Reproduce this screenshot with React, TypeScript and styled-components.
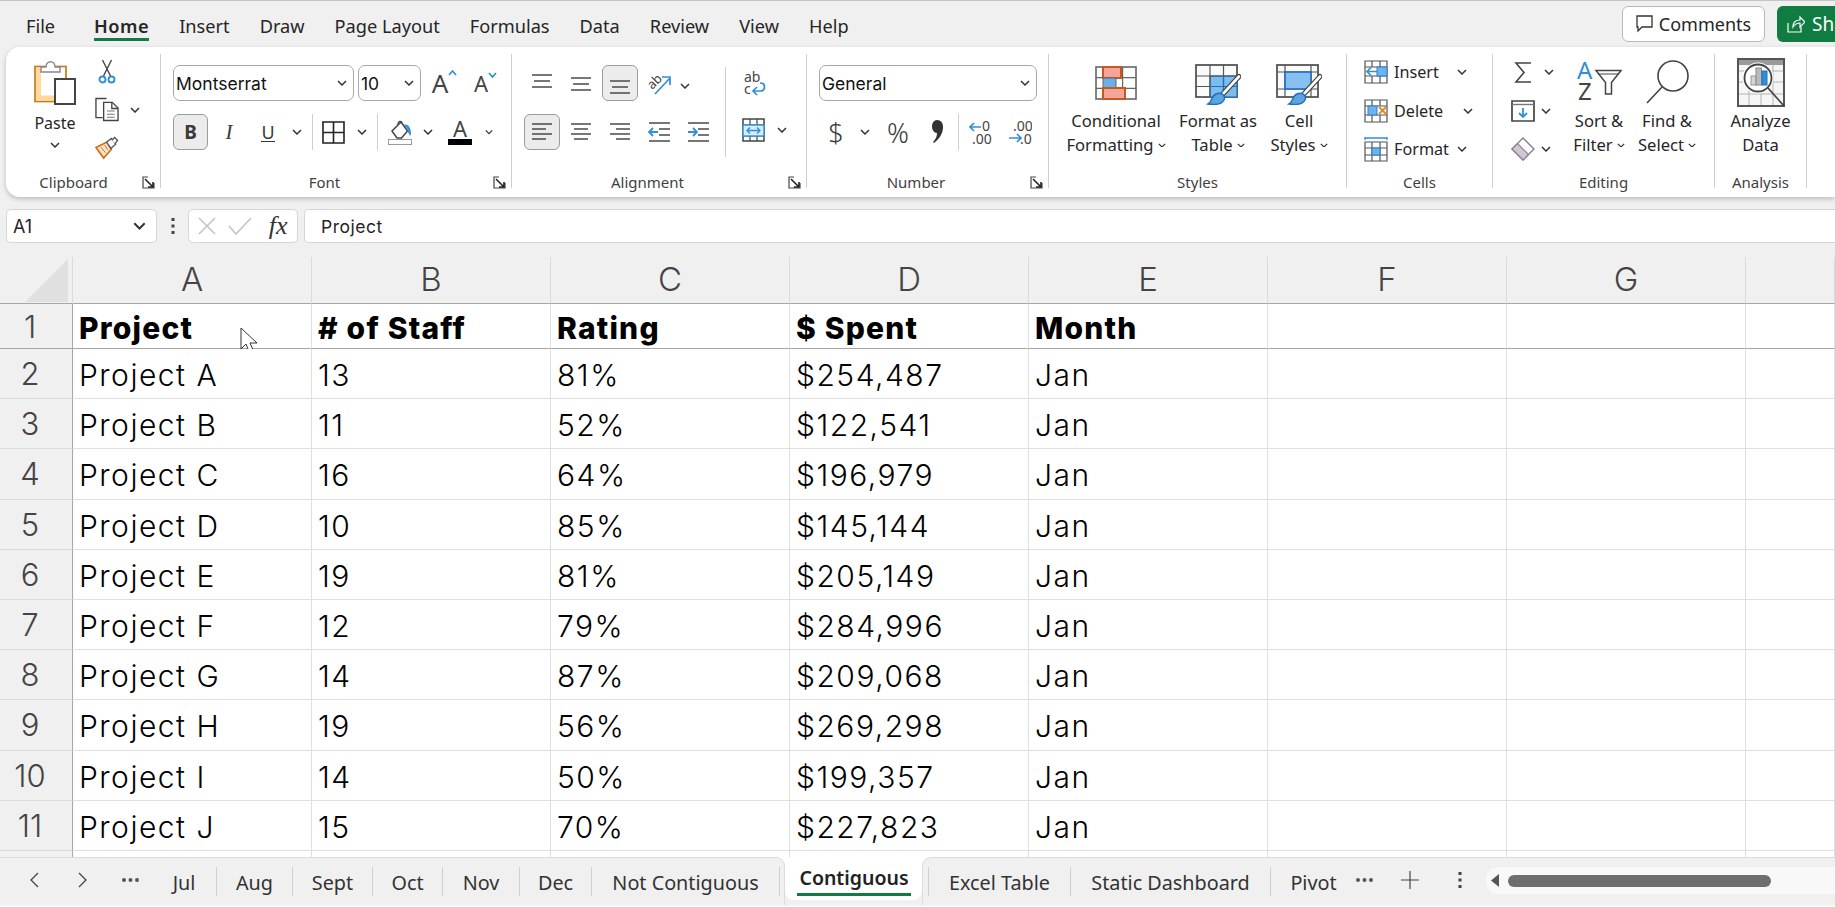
import React from "react";
import styled, { createGlobalStyle } from "styled-components";

const UI_FONT = `"Noto Sans", "Open Sans", sans-serif`;
const CELL_FONT = `Inter, "Open Sans", sans-serif`;
const GREEN = "#107c41";
const BLUE = "#2f8fd8";

const GlobalStyle = createGlobalStyle`
  html, body { margin: 0; padding: 0; background: #f0f0f0; }
  #root { width: 1835px; height: 907px; }
`;

const Win = styled.div`
  width: 1835px;
  height: 907px;
  overflow: hidden;
  display: flex;
  flex-direction: column;
  background: #f0f0f0;
  border-top: 1px solid #c4c4c4;
  box-sizing: border-box;
  font-family: ${UI_FONT};
  color: #262626;
`;

/* top menu */
const MenuBar = styled.div`
  flex: 0 0 46px;
  display: flex;
  align-items: flex-start;
  padding-left: 26px;
`;
const MenuTabs = styled.div`
  display: flex;
  gap: 30px;
`;
const MenuTab = styled.div<{ $active?: boolean }>`
  font-size: 18.2px;
  line-height: 24px;
  height: 40px;
  padding-top: 13px;
  box-sizing: border-box;
  font-weight: ${(p) => (p.$active ? 600 : 400)};
  letter-spacing: ${(p) => (p.$active ? "0.5px" : "0")};
  border-bottom: ${(p) => (p.$active ? `3px solid ${GREEN}` : "none")};
  margin-left: ${(p) => (p.$active ? "9px" : "0")};
`;
const TopActions = styled.div`
  margin-left: auto;
  display: flex;
  gap: 12px;
  padding-top: 5px;
  width: 213px;
  overflow: hidden;
  flex-shrink: 0;
`;
const CommentsBtn = styled.div`
  flex: 0 0 143px;
  height: 36px;
  box-sizing: border-box;
  background: #fff;
  border: 1px solid #b8b8b8;
  border-radius: 6px;
  display: flex;
  align-items: center;
  justify-content: center;
  gap: 6px;
  font-size: 18px;
`;
const ShareBtn = styled.div`
  flex: 0 0 90px;
  height: 36px;
  background: ${GREEN};
  border-radius: 6px;
  color: #fff;
  display: flex;
  align-items: center;
  padding-left: 10px;
  gap: 7px;
  font-size: 19px;
`;

/* ribbon */
const Ribbon = styled.div`
  flex: 0 0 150px;
  margin-left: 6px;
  background: #fff;
  border-radius: 14px 0 0 14px;
  box-shadow: 0 2px 5px rgba(0, 0, 0, 0.22);
  display: flex;
  align-items: flex-start;
  padding-top: 7px;
  box-sizing: border-box;
  position: relative;
`;
const Group = styled.div<{ $w: number }>`
  flex: 0 0 ${(p) => p.$w}px;
  height: 134px;
  box-sizing: border-box;
  border-right: 1px solid #cfcfcf;
  display: flex;
  flex-direction: column;
`;
const GroupBody = styled.div<{ $pad?: number }>`
  height: 116px;
  display: flex;
  padding-left: ${(p) => p.$pad ?? 0}px;
`;
const LabelRow = styled.div`
  height: 18px;
  display: flex;
  align-items: flex-start;
`;
const GroupLabel = styled.div<{ $shift?: number }>`
  flex: 1;
  text-align: center;
  font-size: 15px;
  line-height: 24px;
  color: #3f3f3f;
  padding-left: ${(p) => p.$shift ?? 0}px;
`;
const Launcher = styled.div`
  flex: 0 0 23px;
  padding-top: 6px;
  display: flex;
  justify-content: center;
`;
const PasteCol = styled.div`
  margin-left: 26px;
  width: 46px;
  padding-top: 6px;
  display: flex;
  flex-direction: column;
  align-items: center;
`;
const PasteText = styled.div`
  font-size: 16px;
  line-height: 24px;
  margin-top: 5px;
  margin-bottom: 7px;
`;
const Stack = styled.div<{ $left?: number; $w?: number; $top?: number }>`
  margin-left: ${(p) => p.$left ?? 0}px;
  width: ${(p) => (p.$w ? `${p.$w}px` : "auto")};
  padding-top: ${(p) => p.$top ?? 0}px;
  display: flex;
  flex-direction: column;
  gap: 4.5px;
`;
const StackRow = styled.div`
  height: 34px;
  display: flex;
  align-items: center;
  font-size: 16px;
`;
const Slot = styled.div<{ $w: number }>`
  flex: 0 0 ${(p) => p.$w}px;
  width: ${(p) => p.$w}px;
  display: flex;
  align-items: center;
  justify-content: center;
`;
const RowsCol = styled.div`
  padding-top: 11px;
  display: flex;
  flex-direction: column;
  gap: 13px;
`;
const ToolRow = styled.div`
  height: 36px;
  display: flex;
  align-items: center;
`;
const Combo = styled.div<{ $w: number; $gap?: number }>`
  width: ${(p) => p.$w}px;
  height: 36px;
  box-sizing: border-box;
  border: 1px solid #a8a8a8;
  border-radius: 7px;
  margin-right: ${(p) => p.$gap ?? 0}px;
  padding: 0 6px 0 2px;
  display: flex;
  align-items: center;
  justify-content: space-between;
  font-family: ${CELL_FONT};
  font-size: 17.5px;
  color: #111;
`;
const PressedBtn = styled.div<{ $w?: number }>`
  width: ${(p) => p.$w ?? 35}px;
  height: 36px;
  box-sizing: border-box;
  background: #ececec;
  border: 1px solid #9c9c9c;
  border-radius: 6px;
  display: flex;
  align-items: center;
  justify-content: center;
`;
const ToolSep = styled.div<{ $l?: number; $r?: number }>`
  width: 1px;
  height: 36px;
  background: #cfcfcf;
  margin: 0 ${(p) => p.$r ?? 3}px 0 ${(p) => p.$l ?? 4}px;
`;
const BoldGlyph = styled.span`
  font-size: 19px;
  font-weight: 700;
  color: #3a3a3a;
`;
const ItalicGlyph = styled.span`
  font-family: "Liberation Serif", serif;
  font-style: italic;
  font-size: 21px;
  color: #3a3a3a;
`;
const UnderGlyph = styled.span`
  font-size: 18px;
  color: #3a3a3a;
  border-bottom: 1.5px solid #3a3a3a;
  line-height: 18px;
`;
const SizeGlyph = styled.span<{ $size: number }>`
  font-size: ${(p) => p.$size}px;
  color: #444;
  line-height: 1;
  display: inline-flex;
  align-items: flex-start;
  margin-left: 5px;
`;
const NumGlyph = styled.span<{ $size: number }>`
  font-size: ${(p) => p.$size}px;
  font-family: ${UI_FONT};
  font-weight: 300;
  color: #3a3a3a;
  line-height: 1;
`;
const AlignGrid = styled.div`
  padding-top: 11px;
  display: grid;
  grid-template-columns: repeat(5, 36px);
  grid-auto-rows: 36px;
  column-gap: 3px;
  row-gap: 13px;
  align-items: center;
  justify-items: center;
`;
const AlignChevron = styled.div`
  justify-self: start;
`;
const TallSep = styled.div`
  width: 1px;
  height: 90px;
  margin: 13px 16px 0 9px;
  background: #cfcfcf;
`;
const WrapCol = styled.div`
  padding-top: 17px;
  display: flex;
  flex-direction: column;
  gap: 22px;
`;
const WrapRow = styled.div<{ $indent?: number }>`
  display: flex;
  align-items: center;
  gap: 12px;
  padding-left: ${(p) => p.$indent ?? 0}px;
`;
const BigBtn = styled.div<{ $w: number }>`
  flex: 0 0 ${(p) => p.$w}px;
  width: ${(p) => p.$w}px;
  padding-top: 6px;
  display: flex;
  flex-direction: column;
  align-items: center;
`;
const BigIcon = styled.div`
  height: 46px;
  margin-bottom: 3px;
  display: flex;
  align-items: center;
  justify-content: center;
`;
const BigText = styled.div`
  font-size: 16.6px;
  line-height: 24px;
  text-align: center;
  white-space: nowrap;
  display: flex;
  align-items: center;
  gap: 4px;
`;
const RowText = styled.span<{ $w: number }>`
  width: ${(p) => p.$w}px;
  font-size: 16.2px;
`;

/* formula bar */
const FormulaBar = styled.div`
  flex: 0 0 34px;
  margin-top: 12px;
  display: flex;
  align-items: stretch;
  padding-left: 6px;
`;
const FieldBox = styled.div<{ $w?: number }>`
  ${(p) => (p.$w ? `flex: 0 0 ${p.$w}px;` : "flex: 1;")}
  box-sizing: border-box;
  background: #fff;
  border: 1px solid #d6d6d6;
  border-radius: 5px;
  display: flex;
  align-items: center;
`;
const NameBox = styled(FieldBox)`
  padding: 0 10px 0 6px;
  justify-content: space-between;
  font-family: ${CELL_FONT};
  font-size: 18px;
`;
const FormulaDots = styled.div`
  flex: 0 0 31px;
  display: flex;
  align-items: center;
  justify-content: center;
`;
const FormulaBtns = styled(FieldBox)`
  justify-content: space-around;
  padding: 0 4px 0 2px;
  margin-right: 6px;
`;
const FxText = styled.span`
  font-family: "Liberation Serif", serif;
  font-style: italic;
  font-size: 26px;
  color: #333;
  margin-left: 6px;
`;
const FormulaInput = styled(FieldBox)`
  padding-left: 16px;
  font-family: ${CELL_FONT};
  font-size: 17.5px;
  letter-spacing: 0.5px;
  border-right: none;
  border-radius: 5px 0 0 5px;
`;

/* sheet */
const SheetArea = styled.div`
  flex: 1;
  min-height: 0;
  margin-top: 14px;
  overflow: hidden;
  background: #fff;
`;
const Sheet = styled.div`
  display: grid;
  grid-template-columns: 73px repeat(7, 239px) 1fr;
  grid-template-rows: 47px 45px repeat(10, 50.2px) 20px;
`;
const Corner = styled.div`
  background: #f0f0f0;
  border-right: 1px solid #dadada;
  border-bottom: 1px solid #a6a6a6;
  box-sizing: border-box;
  display: flex;
  justify-content: flex-end;
  align-items: flex-start;
  padding: 1px 3px 0 0;
`;
const ColHead = styled.div`
  background: #f0f0f0;
  border-right: 1px solid #dadada;
  border-bottom: 1px solid #a6a6a6;
  box-sizing: border-box;
  padding-bottom: 2px;
  display: flex;
  align-items: center;
  justify-content: center;
  font-family: ${CELL_FONT};
  font-weight: 300;
  font-size: 33px;
  color: #444;
`;
const RowHead = styled.div<{ $first?: boolean }>`
  background: #f0f0f0;
  border-right: 1px solid #a6a6a6;
  border-bottom: 1px solid ${(p) => (p.$first ? "#a6a6a6" : "#dadada")};
  box-sizing: border-box;
  display: flex;
  align-items: center;
  justify-content: center;
  padding-right: 12px;
  font-family: ${CELL_FONT};
  font-weight: 300;
  font-size: 31px;
  color: #444;
`;
const Cell = styled.div<{ $head?: boolean }>`
  position: relative;
  background: #fff;
  border-right: 1px solid #e0e0e0;
  border-bottom: 1px solid ${(p) => (p.$head ? "#a6a6a6" : "#dfdfdf")};
  box-sizing: border-box;
  padding: 3px 0 0 6px;
  display: flex;
  align-items: center;
  white-space: nowrap;
  font-family: ${CELL_FONT};
  font-size: 30px;
  font-weight: ${(p) => (p.$head ? 800 : 300)};
  letter-spacing: ${(p) => (p.$head ? "1.2px" : "1.5px")};
  color: #000;
`;
const MouseCursor = styled.svg`
  position: absolute;
  left: 167px;
  top: 23px;
`;

/* sheet tabs */
const TabBar = styled.div`
  flex: 0 0 50px;
  display: flex;
  background: linear-gradient(#fff 0 24px, #f0f0f0 24px);
  border-bottom: 2px solid #f9f9f9;
  box-sizing: border-box;
`;
const Strip = styled.div<{ $side: "left" | "right" }>`
  display: flex;
  align-items: flex-start;
  background: #f0f0f0;
  border-top: 1px solid #dcdcdc;
  padding-top: 9px;
  box-sizing: border-box;
  ${(p) =>
    p.$side === "left"
      ? "flex: 0 0 785px; padding-left: 10px; border-top-right-radius: 9px; border-right: 1px solid #dcdcdc;"
      : "flex: 1; padding-left: 5px; border-top-left-radius: 9px; border-left: 1px solid #dcdcdc; min-width: 0;"}
`;
const NavBtn = styled.div<{ $w: number }>`
  flex: 0 0 ${(p) => p.$w}px;
  height: 26px;
  display: flex;
  align-items: center;
  justify-content: center;
`;
const SheetTab = styled.div<{ $w: number; $last?: boolean }>`
  flex: 0 0 ${(p) => p.$w}px;
  height: 29px;
  box-sizing: border-box;
  font-size: 19.8px;
  line-height: 32px;
  text-align: center;
  white-space: nowrap;
  color: #333;
  border-right: ${(p) => (p.$last ? "none" : "1px solid #cfcfcf")};
`;
const FirstSep = styled.div`
  width: 1px;
  height: 29px;
  background: #cfcfcf;
`;
const ActiveTab = styled.div`
  flex: 0 0 137px;
  height: 43px;
  box-sizing: border-box;
  background: #fff;
  border-radius: 0 0 9px 9px;
  padding: 7px 11px 0 12px;
  font-size: 19.5px;
  font-weight: 600;
  line-height: 27px;
  text-align: center;
  white-space: nowrap;
  color: #222;
`;
const ActiveLine = styled.div`
  height: 3px;
  margin-top: 2px;
  background: ${GREEN};
`;
const ScrollTrack = styled.div`
  flex: 1;
  margin-left: 13px;
  height: 27px;
  background: #f8f8f8;
  border-radius: 13px 0 0 13px;
  display: flex;
  align-items: center;
  padding-left: 5px;
`;
const ScrollThumb = styled.div`
  width: 263px;
  height: 12px;
  margin-left: 9px;
  border-radius: 6px;
  background: #6e6e6e;
`;

/* icons */
const Chevron = ({ w = 10, color = "#333" }: { w?: number; color?: string }) => (
  <svg width={w} height={(w * 6) / 10} viewBox="0 0 10 6">
    <path d="M1 1l4 4 4-4" fill="none" stroke={color} strokeWidth="1.5" />
  </svg>
);

const CornerMark = () => (
  <svg width="44" height="44" viewBox="0 0 44 44">
    <path d="M43 1v43H0z" fill="#e0e0e0" />
  </svg>
);

const LauncherIcon = () => (
  <svg width="13" height="13" viewBox="0 0 13 13" fill="none" stroke="#444" strokeWidth="1.2">
    <path d="M6 1H1v11h11V7" />
    <path d="M3 3l8 8M11 6v5H6" strokeWidth="1.6" stroke="#222" />
  </svg>
);

const PasteIcon = () => (
  <svg width="42" height="46" viewBox="0 0 42 46">
    <rect x="1" y="6.500" width="31" height="35" fill="#fff" stroke="#c97a16" strokeWidth="1.7" />
    <path d="M2 7.500h5v28h25v5H2z" fill="#fdd9a0" />
    <path d="M7 12V7h5c0-7 9-7 9 0h5v5z" fill="#fff" stroke="#888" strokeWidth="1.4" />
    <rect x="21" y="19" width="20" height="25" fill="#fff" stroke="#444" strokeWidth="2" />
  </svg>
);
const CutIcon = () => (
  <svg width="18" height="25" viewBox="0 0 18 25" fill="none">
    <path d="M4.500 1l8 16M13.500 1l-8 16" stroke="#444" strokeWidth="1.4" />
    <circle cx="4.500" cy="20.500" r="3" stroke={BLUE} strokeWidth="1.9" />
    <circle cx="13.500" cy="20.500" r="3" stroke={BLUE} strokeWidth="1.9" />
  </svg>
);
const CopyIcon = () => (
  <svg width="25" height="25" viewBox="0 0 25 25" fill="none" stroke="#444" strokeWidth="1.4">
    <path d="M12 1H1v20h7" />
    <path d="M9 5h9l6 6v13H9z" fill="#fff" />
    <path d="M17.500 5v6.500H24" />
    <path d="M12.500 14h8M12.500 17.500h8M12.500 20.500h8" stroke="#777" strokeWidth="1.1" />
  </svg>
);
const PainterIcon = () => (
  <svg width="25" height="24" viewBox="0 0 25 24">
    <path d="M1 11.500L13 5.500l4 8-8 9z" fill="#fbe3c4" stroke="#c9701a" strokeWidth="1.7" />
    <path d="M6 11l5 6M10 9l3.500 5" stroke="#c9701a" strokeWidth="1" />
    <path d="M12 6l5-4 4.500 6-5 4.500z" fill="#fff" stroke="#555" strokeWidth="1.4" />
    <path d="M17.500 4l3-3 3 3-2.500 3.500" fill="#fff" stroke="#555" strokeWidth="1.4" />
  </svg>
);
const Caret = ({ up }: { up?: boolean }) => (
  <svg width="9" height="6" viewBox="0 0 9 6">
    <path d={up ? "M1 5l3.5-4L8 5" : "M1 1l3.5 4L8 1"} fill="none" stroke={BLUE} strokeWidth="1.7" />
  </svg>
);
const BordersIcon = () => (
  <svg width="23" height="23" viewBox="0 0 23 23" fill="none" stroke="#222" strokeWidth="1.6">
    <path d="M1 1h21v21H1zM11.500 1v21M1 11.500h21" />
  </svg>
);
const BucketIcon = () => (
  <svg width="24" height="25" viewBox="0 0 24 25" fill="none">
    <path d="M10 8V4c0-3.500 4-3.500 4 0v4" stroke="#444" strokeWidth="1.2" />
    <path d="M4 11l9-9 6.500 9-6 7H9z" fill="#fff" stroke="#444" strokeWidth="1.5" />
    <path d="M15 5c4-2 8 1 8 9l-1 2-2-4-1-4z" fill={BLUE} />
    <rect x="0.500" y="19.500" width="23" height="5" fill="#fff" stroke="#999" />
  </svg>
);
const ColorAIcon = () => (
  <svg width="24" height="25" viewBox="0 0 24 25">
    <text x="12" y="17" textAnchor="middle" fontFamily={UI_FONT} fontSize="22" fill="#444">A</text>
    <rect x="0" y="19" width="24" height="6" fill="#000" />
  </svg>
);
const Lines = ({ ys, xs }: { ys: number[]; xs: [number, number][] }) => (
  <svg width="22" height="22" viewBox="0 0 22 22" stroke="#4a4a4a" strokeWidth="1.5">
    {ys.map((y, i) => (
      <path key={y} d={`M${xs[i][0]} ${y}H${xs[i][1]}`} />
    ))}
  </svg>
);
const Full: [number, number][] = [[1, 21], [3, 19], [1, 21]];
const OrientIcon = () => (
  <svg width="25" height="25" viewBox="0 0 25 25" fill="none">
    <text x="1" y="15" fontFamily={UI_FONT} fontSize="13" fill="#444" transform="rotate(-45 8 12)">ab</text>
    <path d="M8 23L23 7M15 6h8v8" stroke={BLUE} strokeWidth="1.7" />
  </svg>
);
const IndentIcon = ({ inward }: { inward?: boolean }) => (
  <svg width="22" height="22" viewBox="0 0 22 22" fill="none">
    <path d="M1 2h21M11 8h11M11 14h11M1 20h21" stroke="#4a4a4a" strokeWidth="1.5" />
    <path d={inward ? "M1 11h8M6 7l4 4-4 4" : "M10 11H2M5 7l-4 4 4 4"} stroke={BLUE} strokeWidth="1.8" />
  </svg>
);
const WrapIcon = () => (
  <svg width="22" height="25" viewBox="0 0 22 25" fill="none">
    <text x="0" y="11" fontFamily={UI_FONT} fontSize="14" fill="#444">ab</text>
    <text x="0" y="23" fontFamily={UI_FONT} fontSize="14" fill="#444">c</text>
    <path d="M10 20h6c6 0 6-8 0-8M13 16l-4 4 4 4" stroke={BLUE} strokeWidth="1.7" />
  </svg>
);
const MergeIcon = () => (
  <svg width="23" height="24" viewBox="0 0 23 24" fill="none">
    <path d="M1 1h21v22H1z" stroke="#444" strokeWidth="1.5" />
    <path d="M1 7h21M1 18h21M8 1v6M15 1v6M8 18v5M15 18v5" stroke="#444" strokeWidth="1.2" />
    <rect x="1" y="7" width="21" height="11" fill="#d9ecfa" stroke={BLUE} strokeWidth="1.4" />
    <path d="M5 12.500h13M8 9.500l-3 3 3 3M15 9.500l3 3-3 3" stroke={BLUE} strokeWidth="1.4" />
  </svg>
);
const DecIcon = ({ more }: { more?: boolean }) => (
  <svg width="24" height="25" viewBox="0 0 24 25" fill="none">
    <text x={more ? 5 : 14} y="11" fontFamily={UI_FONT} fontSize="14" fill="#444">{more ? ".00" : "0"}</text>
    <text x={more ? 12 : 4} y="24" fontFamily={UI_FONT} fontSize="14" fill="#444">{more ? ".0" : ".00"}</text>
    <path d={more ? "M1 18h12M9 14l4 4-4 4" : "M13 7H2M6 3L2 7l4 4"} stroke={BLUE} strokeWidth="1.7" />
  </svg>
);
const CommaIcon = () => (
  <svg width="13" height="24" viewBox="0 0 13 24">
    <path d="M6 0c4 0 6 3 6 7 0 7-4 12-9 16l-1-1c3-3 4-6 4-9-3 0-5-3-5-6.500S3 0 6 0z" fill="#333" />
  </svg>
);
const Brush = () => (
  <g>
    <path d="M44 15.500L26 35" stroke="#444" strokeWidth="5" strokeLinecap="round" />
    <path d="M44 15.500L26 35" stroke="#fff" strokeWidth="2.6" strokeLinecap="round" />
    <path d="M21 33c5-2 10 1 8 6-2 4-9 5-16 4 4-2 3-8 8-10z" fill="#5aa4e2" stroke="#1f6fbd" strokeWidth="1.4" />
  </g>
);
const CondIcon = () => (
  <svg width="42" height="35" viewBox="0 0 42 35">
    <g fill="none" stroke="#666" strokeWidth="1.2">
      <rect x="1" y="1" width="40" height="32" strokeWidth="1.6" />
      <path d="M14.300 1v32M27.600 1v32M1 11.700h40M1 22.300h40" />
    </g>
    <rect x="8" y="1" width="18" height="11" fill="#f5a49a" stroke="#c2591f" strokeWidth="2" />
    <rect x="8" y="12" width="13" height="10" fill="#67b0ea" stroke="#666" />
    <rect x="8" y="22" width="22" height="11" fill="#f5a49a" stroke="#c2591f" strokeWidth="2" />
  </svg>
);
const TableIcon = () => (
  <svg width="46" height="44" viewBox="0 0 46 44">
    <rect x="1" y="4" width="41" height="32" fill="#fafafa" stroke="#555" strokeWidth="1.8" />
    <rect x="15" y="15" width="27" height="21" fill="#7dbcef" stroke="#1f6fbd" strokeWidth="1.2" />
    <path d="M15 4v32M28.500 4v32M1 15h41M1 25.500h41" stroke="#555" strokeWidth="1.2" />
    <path d="M15 25.500h27M28.500 15v21" stroke="#1f6fbd" strokeWidth="1.2" />
    <Brush />
  </svg>
);
const StylesIcon = () => (
  <svg width="46" height="44" viewBox="0 0 46 44">
    <rect x="1" y="4" width="41" height="32" fill="#fafafa" stroke="#555" strokeWidth="1.8" />
    <path d="M9 4v32M35 4v32M1 11h41M1 28h41" stroke="#555" strokeWidth="1.2" />
    <rect x="9" y="11" width="26" height="17" fill="#86bff0" stroke="#1f6fbd" strokeWidth="1.6" />
    <Brush />
  </svg>
);
const InsertIcon = () => (
  <svg width="24" height="24" viewBox="0 0 24 24" fill="none">
    <path d="M1 1h22v22H1zM1 7h22M1 16h22M8 1v6M16 1v6M8 16v7M16 16v7" stroke="#555" strokeWidth="1.2" />
    <rect x="13" y="7" width="10" height="9" fill="#6db4ec" stroke="#2d80c9" />
    <path d="M13 11.500H3M7 7.500l-4 4 4 4" stroke={BLUE} strokeWidth="1.7" />
  </svg>
);
const DeleteIcon = () => (
  <svg width="24" height="24" viewBox="0 0 24 24" fill="none">
    <path d="M1 1h22v22H1zM1 7h22M1 16h22M8 1v6M16 1v6M8 16v7M16 16v7" stroke="#555" strokeWidth="1.2" />
    <rect x="4" y="7" width="9" height="9" fill="#6db4ec" stroke="#2d80c9" />
    <path d="M15 8l7 7M22 8l-7 7" stroke="#e08a2c" strokeWidth="1.8" />
  </svg>
);
const FormatIcon = () => (
  <svg width="24" height="25" viewBox="0 0 24 25" fill="none">
    <path d="M1 1h22M1 0v3M23 0v3" stroke={BLUE} strokeWidth="1.3" />
    <path d="M1 5h22v19H1zM1 11h22M1 18h22M8 5v19M16 5v19" stroke="#555" strokeWidth="1.2" />
    <rect x="8" y="11" width="8" height="7" fill="#6db4ec" stroke="#2d80c9" />
  </svg>
);
const SigmaIcon = () => (
  <svg width="18" height="23" viewBox="0 0 18 23" fill="none">
    <path d="M17 2H2l8 9.500L2 21h15" stroke="#444" strokeWidth="1.6" />
  </svg>
);
const FillIcon = () => (
  <svg width="24" height="22" viewBox="0 0 24 22" fill="none">
    <path d="M1 1h22v20H1z" stroke="#444" strokeWidth="1.7" />
    <path d="M1 4.500h22" stroke="#777" strokeWidth="1.4" />
    <path d="M12 8v9M8 13l4 4 4-4" stroke={BLUE} strokeWidth="1.8" />
  </svg>
);
const ClearIcon = () => (
  <svg width="24" height="24" viewBox="0 0 24 24">
    <path d="M12 1l11 11-11 11L1 12z" fill="#fff" stroke="#8c7c92" strokeWidth="1.4" />
    <path d="M6.500 6.500L1 12l11 11 5.500-5.500z" fill="#cfc8d2" stroke="#8c7c92" strokeWidth="1.2" />
  </svg>
);
const SortIcon = () => (
  <svg width="46" height="46" viewBox="0 0 46 46" fill="none">
    <text x="1" y="19" fontFamily={UI_FONT} fontSize="24" fill={BLUE}>A</text>
    <text x="2" y="40" fontFamily={UI_FONT} fontSize="24" fill="#444">Z</text>
    <path d="M20 10.500h25l-9.500 12V34h-6V22.500z" fill="#fff" stroke="#444" strokeWidth="1.5" />
    <path d="M22 14h21" stroke="#444" strokeWidth="1" />
  </svg>
);
const FindIcon = () => (
  <svg width="46" height="46" viewBox="0 0 46 46" fill="none">
    <circle cx="29" cy="16" r="15" stroke="#444" strokeWidth="1.6" fill="#fff" />
    <path d="M18 27L3 43" stroke="#444" strokeWidth="1.6" />
  </svg>
);
const AnalyzeIcon = () => (
  <svg width="48" height="50" viewBox="0 0 48 50" fill="none">
    <rect x="1" y="1" width="46" height="47" fill="#f6f6f6" stroke="#555" strokeWidth="2" />
    <rect x="2" y="2" width="44" height="5" fill="#9a9a9a" />
    <path d="M2 13h44M2 24h44M2 36h44M12 7v40M24 7v40M36 7v40" stroke="#b4b4b4" />
    <circle cx="21" cy="20" r="15.500" fill="#fff" />
    <circle cx="21" cy="20" r="13.500" fill="#fff" stroke="#444" strokeWidth="1.8" />
    <rect x="14" y="18" width="5" height="9" fill="#d4d4d4" stroke="#999" />
    <rect x="19" y="10" width="5.500" height="17" fill="#bbb" stroke="#888" />
    <rect x="25" y="13" width="5" height="14" fill={BLUE} stroke="#1f6fbd" />
    <path d="M31 30l16 18" stroke="#444" strokeWidth="1.8" />
  </svg>
);
const CommentIcon = () => (
  <svg width="17" height="18" viewBox="0 0 17 18" fill="none">
    <path d="M1 1h15v11H6l-4 4v-4H1z" stroke="#333" strokeWidth="1.3" />
  </svg>
);
const ShareIcon = () => (
  <svg width="18" height="18" viewBox="0 0 18 18" fill="none" stroke="#fff" strokeWidth="1.2">
    <path d="M1 8v9h13v-5" />
    <path d="M6 12c0-5 3-7 7-7V2l5 5-5 5V8c-3 0-5 1-7 4z" />
  </svg>
);
const DotsV = ({ color = "#444" }: { color?: string }) => (
  <svg width="4" height="16" viewBox="0 0 4 16" fill={color}>
    <rect x="0.500" y="0" width="3" height="3" />
    <rect x="0.500" y="6.500" width="3" height="3" />
    <rect x="0.500" y="13" width="3" height="3" />
  </svg>
);
const DotsH = () => (
  <svg width="17" height="4" viewBox="0 0 17 4" fill="#555">
    <circle cx="2" cy="2" r="2" />
    <circle cx="8.500" cy="2" r="2" />
    <circle cx="15" cy="2" r="2" />
  </svg>
);

const rows = [
  ["Project A", "13", "81%", "$254,487", "Jan"],
  ["Project B", "11", "52%", "$122,541", "Jan"],
  ["Project C", "16", "64%", "$196,979", "Jan"],
  ["Project D", "10", "85%", "$145,144", "Jan"],
  ["Project E", "19", "81%", "$205,149", "Jan"],
  ["Project F", "12", "79%", "$284,996", "Jan"],
  ["Project G", "14", "87%", "$209,068", "Jan"],
  ["Project H", "19", "56%", "$269,298", "Jan"],
  ["Project I", "14", "50%", "$199,357", "Jan"],
  ["Project J", "15", "70%", "$227,823", "Jan"],
];
const heads = ["Project", "# of Staff", "Rating", "$ Spent", "Month"];
const cols = ["A", "B", "C", "D", "E", "F", "G"];
const leftTabs: [string, number][] = [
  ["Jul", 65], ["Aug", 76], ["Sept", 80], ["Oct", 70], ["Nov", 77], ["Dec", 72], ["Not Contiguous", 188],
];
const menu = ["File", "Home", "Insert", "Draw", "Page Layout", "Formulas", "Data", "Review", "View", "Help"];

export default function App() {
  return (
    <Win>
      <GlobalStyle />
      <MenuBar>
        <MenuTabs>
          {menu.map((m) => (
            <MenuTab key={m} $active={m === "Home"}>{m}</MenuTab>
          ))}
        </MenuTabs>
        <TopActions>
          <CommentsBtn><CommentIcon />Comments</CommentsBtn>
          <ShareBtn><ShareIcon />Share</ShareBtn>
        </TopActions>
      </MenuBar>

      <Ribbon>
        <Group $w={155}>
          <GroupBody>
            <PasteCol>
              <PasteIcon />
              <PasteText>Paste</PasteText>
              <Chevron />
            </PasteCol>
            <Stack $left={17}>
              <StackRow><Slot $w={24}><CutIcon /></Slot></StackRow>
              <StackRow><Slot $w={24}><CopyIcon /></Slot><Slot $w={32}><Chevron /></Slot></StackRow>
              <StackRow><Slot $w={24}><PainterIcon /></Slot></StackRow>
            </Stack>
          </GroupBody>
          <LabelRow><GroupLabel $shift={4}>Clipboard</GroupLabel><Launcher><LauncherIcon /></Launcher></LabelRow>
        </Group>

        <Group $w={351}>
          <GroupBody $pad={12}>
            <RowsCol>
              <ToolRow>
                <Combo $w={181} $gap={4}>Montserrat<Chevron /></Combo>
                <Combo $w={63}>10<Chevron /></Combo>
                <Slot $w={42}><SizeGlyph $size={26}>A<Caret up /></SizeGlyph></Slot>
                <Slot $w={40}><SizeGlyph $size={22}>A<Caret /></SizeGlyph></Slot>
              </ToolRow>
              <ToolRow>
                <PressedBtn><BoldGlyph>B</BoldGlyph></PressedBtn>
                <Slot $w={42}><ItalicGlyph>I</ItalicGlyph></Slot>
                <Slot $w={36}><UnderGlyph>U</UnderGlyph></Slot>
                <Slot $w={22}><Chevron /></Slot>
                <ToolSep />
                <Slot $w={34}><BordersIcon /></Slot>
                <Slot $w={24}><Chevron /></Slot>
                <ToolSep $l={3} $r={1} />
                <Slot $w={42}><BucketIcon /></Slot>
                <Slot $w={14}><Chevron /></Slot>
                <Slot $w={50}><ColorAIcon /></Slot>
                <Slot $w={8}><Chevron /></Slot>
              </ToolRow>
            </RowsCol>
          </GroupBody>
          <LabelRow><GroupLabel>Font</GroupLabel><Launcher><LauncherIcon /></Launcher></LabelRow>
        </Group>

        <Group $w={295}>
          <GroupBody $pad={12}>
            <AlignGrid>
              <Lines ys={[3, 9, 15]} xs={Full} />
              <Lines ys={[6, 12, 18]} xs={Full} />
              <PressedBtn $w={36}><Lines ys={[9, 15, 21]} xs={Full} /></PressedBtn>
              <OrientIcon />
              <AlignChevron><Chevron /></AlignChevron>
              <PressedBtn $w={36}><Lines ys={[3, 8, 13, 18]} xs={[[1, 21], [1, 15], [1, 21], [1, 15]]} /></PressedBtn>
              <Lines ys={[3, 8, 13, 18]} xs={[[1, 21], [4, 18], [1, 21], [4, 18]]} />
              <Lines ys={[3, 8, 13, 18]} xs={[[1, 21], [7, 21], [1, 21], [7, 21]]} />
              <IndentIcon />
              <IndentIcon inward />
            </AlignGrid>
            <TallSep />
            <WrapCol>
              <WrapRow $indent={2}><WrapIcon /></WrapRow>
              <WrapRow><MergeIcon /><Chevron /></WrapRow>
            </WrapCol>
          </GroupBody>
          <LabelRow><GroupLabel>Alignment</GroupLabel><Launcher><LauncherIcon /></Launcher></LabelRow>
        </Group>

        <Group $w={242}>
          <GroupBody $pad={12}>
            <RowsCol>
              <ToolRow><Combo $w={218}>General<Chevron /></Combo></ToolRow>
              <ToolRow>
                <Slot $w={34}><NumGlyph $size={27}>$</NumGlyph></Slot>
                <Slot $w={24}><Chevron /></Slot>
                <Slot $w={42}><NumGlyph $size={27}>%</NumGlyph></Slot>
                <Slot $w={36}><CommaIcon /></Slot>
                <ToolSep $l={3} $r={9} />
                <DecIcon />
                <Slot $w={16} />
                <DecIcon more />
              </ToolRow>
            </RowsCol>
          </GroupBody>
          <LabelRow><GroupLabel>Number</GroupLabel><Launcher><LauncherIcon /></Launcher></LabelRow>
        </Group>

        <Group $w={298}>
          <GroupBody $pad={12}>
            <BigBtn $w={110}>
              <BigIcon><CondIcon /></BigIcon>
              <BigText>Conditional</BigText>
              <BigText>Formatting <Chevron w={8} /></BigText>
            </BigBtn>
            <BigBtn $w={94}>
              <BigIcon><TableIcon /></BigIcon>
              <BigText>Format as</BigText>
              <BigText>Table <Chevron w={8} /></BigText>
            </BigBtn>
            <BigBtn $w={68}>
              <BigIcon><StylesIcon /></BigIcon>
              <BigText>Cell</BigText>
              <BigText>Styles <Chevron w={8} /></BigText>
            </BigBtn>
          </GroupBody>
          <LabelRow><GroupLabel>Styles</GroupLabel></LabelRow>
        </Group>

        <Group $w={146}>
          <GroupBody>
            <Stack $left={17} $top={1}>
              <StackRow><InsertIcon /><Slot $w={6} /><RowText $w={63}>Insert</RowText><Chevron /></StackRow>
              <StackRow><DeleteIcon /><Slot $w={6} /><RowText $w={69}>Delete</RowText><Chevron /></StackRow>
              <StackRow><FormatIcon /><Slot $w={6} /><RowText $w={63}>Format</RowText><Chevron /></StackRow>
            </Stack>
          </GroupBody>
          <LabelRow><GroupLabel>Cells</GroupLabel></LabelRow>
        </Group>

        <Group $w={222}>
          <GroupBody>
            <Stack $left={17} $w={57} $top={1}>
              <StackRow><Slot $w={26}><SigmaIcon /></Slot><Slot $w={26}><Chevron /></Slot></StackRow>
              <StackRow><Slot $w={26}><FillIcon /></Slot><Slot $w={20}><Chevron /></Slot></StackRow>
              <StackRow><Slot $w={26}><ClearIcon /></Slot><Slot $w={20}><Chevron /></Slot></StackRow>
            </Stack>
            <BigBtn $w={64}>
              <BigIcon><SortIcon /></BigIcon>
              <BigText>Sort &amp;</BigText>
              <BigText>Filter <Chevron w={8} /></BigText>
            </BigBtn>
            <BigBtn $w={72}>
              <BigIcon><FindIcon /></BigIcon>
              <BigText>Find &amp;</BigText>
              <BigText>Select <Chevron w={8} /></BigText>
            </BigBtn>
          </GroupBody>
          <LabelRow><GroupLabel>Editing</GroupLabel></LabelRow>
        </Group>

        <Group $w={92}>
          <GroupBody>
            <BigBtn $w={91}>
              <BigIcon><AnalyzeIcon /></BigIcon>
              <BigText>Analyze</BigText>
              <BigText>Data</BigText>
            </BigBtn>
          </GroupBody>
          <LabelRow><GroupLabel>Analysis</GroupLabel></LabelRow>
        </Group>
      </Ribbon>

      <FormulaBar>
        <NameBox $w={151}>A1<Chevron w={13} /></NameBox>
        <FormulaDots><DotsV /></FormulaDots>
        <FormulaBtns $w={110}>
          <svg width="20" height="20" viewBox="0 0 20 20" fill="none" stroke="#c4c4c4" strokeWidth="1.6">
            <path d="M2 2l16 16M18 2L2 18" />
          </svg>
          <svg width="24" height="18" viewBox="0 0 24 18" fill="none" stroke="#c4c4c4" strokeWidth="1.6">
            <path d="M1 9l7 8L23 1" />
          </svg>
          <FxText>fx</FxText>
        </FormulaBtns>
        <FormulaInput>Project</FormulaInput>
      </FormulaBar>

      <SheetArea>
        <Sheet>
          <Corner><CornerMark /></Corner>
          {cols.map((c) => <ColHead key={c}>{c}</ColHead>)}
          <ColHead />

          <RowHead $first>1</RowHead>
          {heads.map((h, i) => (
            <Cell key={h} $head>
              {h}
              {i === 0 && (
                <MouseCursor width="20" height="28" viewBox="0 0 20 28">
                  <path d="M1 1v21l5-5 4 10 4-2-4-9h7z" fill="#fff" stroke="#333" strokeWidth="1" />
                </MouseCursor>
              )}
            </Cell>
          ))}
          {[0, 1, 2].map((i) => <Cell key={i} $head />)}

          {rows.map((row, r) => (
            <React.Fragment key={row[0]}>
              <RowHead>{r + 2}</RowHead>
              {row.map((v, c) => <Cell key={c}>{v}</Cell>)}
              {[0, 1, 2].map((i) => <Cell key={i} />)}
            </React.Fragment>
          ))}
          <RowHead />
          {[0, 1, 2, 3, 4, 5, 6, 7].map((i) => <Cell key={i} />)}
        </Sheet>
      </SheetArea>

      <TabBar>
        <Strip $side="left">
          <NavBtn $w={48}>
            <svg width="10" height="16" viewBox="0 0 10 16" fill="none" stroke="#444" strokeWidth="1.3"><path d="M9 1L2 8l7 7" /></svg>
          </NavBtn>
          <NavBtn $w={50}>
            <svg width="10" height="16" viewBox="0 0 10 16" fill="none" stroke="#444" strokeWidth="1.3"><path d="M1 1l7 7-7 7" /></svg>
          </NavBtn>
          <NavBtn $w={44}><DotsH /></NavBtn>
          {leftTabs.map(([t, w]) => <SheetTab key={t} $w={w}>{t}</SheetTab>)}
        </Strip>
        <ActiveTab>Contiguous<ActiveLine /></ActiveTab>
        <Strip $side="right">
          <FirstSep />
          <SheetTab $w={142}>Excel Table</SheetTab>
          <SheetTab $w={200}>Static Dashboard</SheetTab>
          <SheetTab $w={85} $last>Pivot</SheetTab>
          <NavBtn $w={16}><DotsH /></NavBtn>
          <NavBtn $w={73}>
            <svg width="18" height="18" viewBox="0 0 18 18" stroke="#444" strokeWidth="1.2"><path d="M9 0v18M0 9h18" /></svg>
          </NavBtn>
          <NavBtn $w={27}><DotsV /></NavBtn>
          <ScrollTrack>
            <svg width="8" height="13" viewBox="0 0 8 13" fill="#555"><path d="M8 0v13L0 6.500z" /></svg>
            <ScrollThumb />
          </ScrollTrack>
        </Strip>
      </TabBar>
    </Win>
  );
}
